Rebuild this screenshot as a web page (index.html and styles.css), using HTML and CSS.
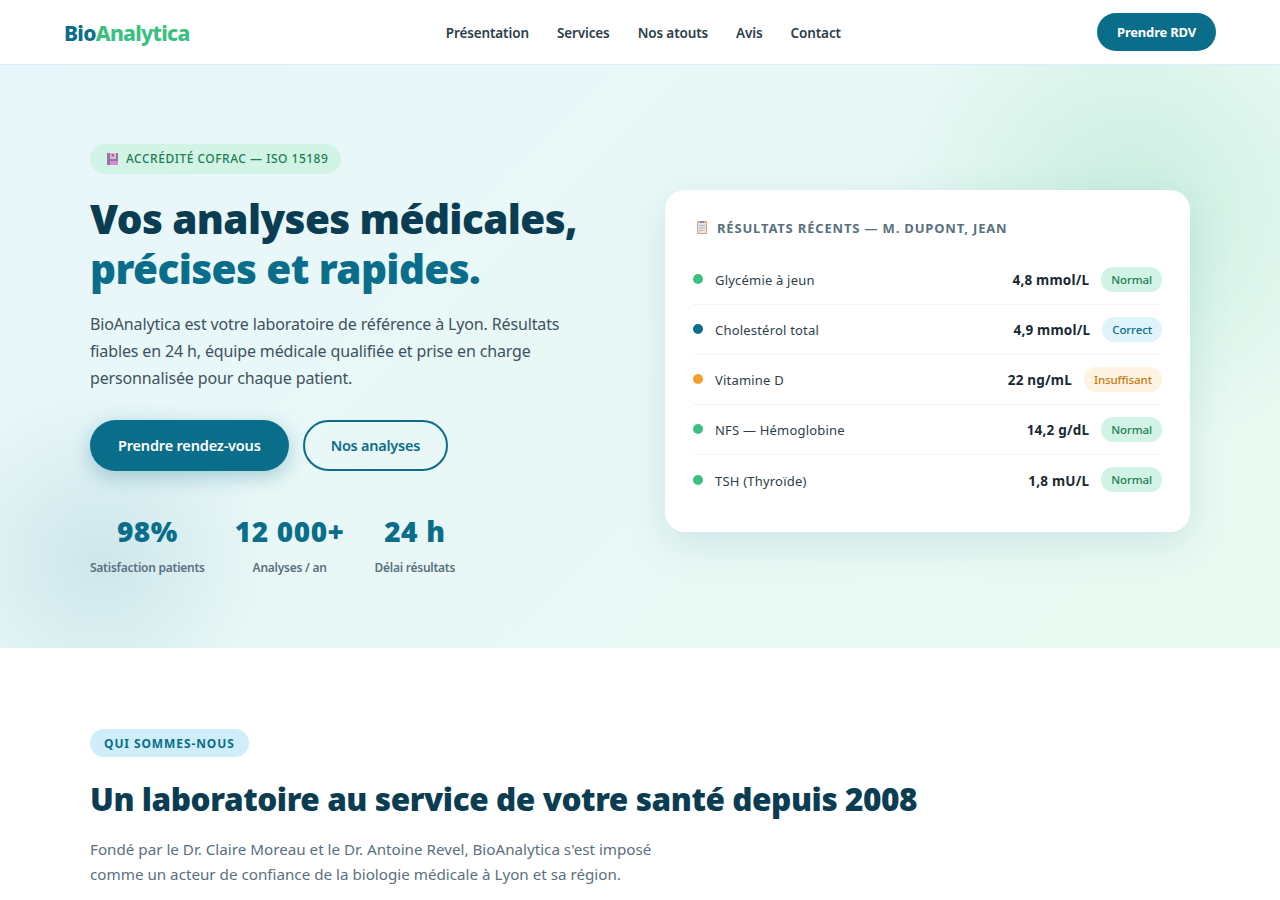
FILE: index.html
```html
<!DOCTYPE html>
<html lang="fr">
<head>
<meta charset="utf-8">
<title>BioAnalytica</title>
<link rel="stylesheet" href="styles.css">
</head>
<body>
<header class="nav">
  <a class="logo" href="#">Bio<span>Analytica</span></a>
  <nav class="nav-links">
    <a href="#">Présentation</a>
    <a href="#">Services</a>
    <a href="#">Nos atouts</a>
    <a href="#">Avis</a>
    <a href="#">Contact</a>
  </nav>
  <a class="nav-cta" href="#">Prendre RDV</a>
</header>
<section class="hero">
  <div class="blob blob-top"></div>
  <div class="blob blob-bottom"></div>
  <div class="hero-grid">
    <div class="hero-left">
      <div class="badge">
        <svg class="badge-icon" viewBox="0 0 11 12" width="11" height="12"><rect width="11" height="12" fill="#8f7aa3"/><rect x="3" y="0" width="6" height="6" fill="#d8bcd8"/><rect x="4.5" y="1" width="2.5" height="2.5" fill="#e0408f"/><rect x="3" y="8" width="8" height="4" fill="#d68ad8"/></svg>
        <span>ACCRÉDITÉ COFRAC — ISO 15189</span>
      </div>
      <h1>Vos analyses médicales,<br><span>précises et rapides.</span></h1>
      <p class="lead">BioAnalytica est votre laboratoire de référence à Lyon. Résultats fiables en 24 h, équipe médicale qualifiée et prise en charge personnalisée pour chaque patient.</p>
      <div class="actions">
        <a class="btn btn-primary" href="#">Prendre rendez-vous</a>
        <a class="btn btn-outline" href="#">Nos analyses</a>
      </div>
      <div class="stats">
        <div class="stat"><strong>98%</strong><span>Satisfaction patients</span></div>
        <div class="stat"><strong>12 000+</strong><span>Analyses / an</span></div>
        <div class="stat"><strong>24 h</strong><span>Délai résultats</span></div>
      </div>
    </div>
    <div class="card">
      <div class="card-title">
        <svg viewBox="0 0 10 13" width="10" height="13"><rect width="10" height="13" rx="1" fill="#d9a077"/><rect x="1" y="1.5" width="8" height="10.5" fill="#e4e4ea"/><rect x="3" y="0" width="4" height="2" fill="#8c8c96"/><rect x="2" y="4" width="6" height="1" fill="#b5b5c0"/><rect x="2" y="6.5" width="6" height="1" fill="#b5b5c0"/><rect x="2" y="9" width="4" height="1" fill="#b5b5c0"/></svg>
        <span>RÉSULTATS RÉCENTS — M. DUPONT, JEAN</span>
      </div>
      <div class="row"><i class="dot green"></i><span class="name">Glycémie à jeun</span><b class="val">4,8 mmol/L</b><em class="tag tag-green">Normal</em></div>
      <div class="row"><i class="dot blue"></i><span class="name">Cholestérol total</span><b class="val">4,9 mmol/L</b><em class="tag tag-blue">Correct</em></div>
      <div class="row"><i class="dot orange"></i><span class="name">Vitamine D</span><b class="val">22 ng/mL</b><em class="tag tag-orange">Insuffisant</em></div>
      <div class="row"><i class="dot green"></i><span class="name">NFS — Hémoglobine</span><b class="val">14,2 g/dL</b><em class="tag tag-green">Normal</em></div>
      <div class="row"><i class="dot green"></i><span class="name">TSH (Thyroïde)</span><b class="val">1,8 mU/L</b><em class="tag tag-green">Normal</em></div>
    </div>
  </div>
</section>
<section class="about">
  <div class="pill">QUI SOMMES-NOUS</div>
  <h2>Un laboratoire au service de votre santé depuis 2008</h2>
  <p>Fondé par le Dr. Claire Moreau et le Dr. Antoine Revel, BioAnalytica s'est imposé comme un acteur de confiance de la biologie médicale à Lyon et sa région.</p>
</section>
</body>
</html>
```
FILE: styles.css
```css
* { box-sizing: border-box; }
html, body { margin: 0; padding: 0; }
body { font-family: "Noto Sans", "Open Sans", sans-serif; color: #0a3d52; background: #fff; }
a { text-decoration: none; color: inherit; }

.nav { height: 65px; padding: 0 64px; display: flex; align-items: center; justify-content: space-between; background: #fff; border-bottom: 1px solid #d9eff7; }
.logo { padding-top: 2px; font-size: 21px; font-weight: 800; color: #0a6e8a; letter-spacing: -0.7px; }
.logo span { color: #3dbf82; }
.nav-links { padding-top: 2px; display: flex; gap: 28px; font-size: 13.5px; font-weight: 600; color: #2d3e4a; letter-spacing: -0.12px; }
.nav-cta { height: 38px; padding: 0 20px; display: flex; align-items: center; border-radius: 19px; background: #0a6e8a; color: #fff; font-size: 13px; font-weight: 700; letter-spacing: -0.2px; }

.hero { position: relative; overflow: hidden; height: 583px; padding: 6px 90px 0; display: flex; align-items: center; background: linear-gradient(135deg, #e8f6fb 0%, #eafaf1 100%); }
.blob { position: absolute; border-radius: 50%; }
.blob-top { width: 500px; height: 500px; right: -100px; top: -105px; background: radial-gradient(circle, rgba(61,191,130,.18) 0%, rgba(61,191,130,0) 70%); }
.blob-bottom { width: 350px; height: 350px; left: -75px; top: 320px; background: radial-gradient(circle, rgba(10,110,138,.12) 0%, rgba(10,110,138,0) 70%); }
.hero-grid { position: relative; width: 1100px; display: grid; grid-template-columns: 525px 525px; gap: 50px; align-items: center; }

.badge { display: inline-flex; align-items: center; gap: 8px; height: 30px; padding: 0 13px 0 17px; border-radius: 15px; background: #d2f4e6; color: #1e7d52; font-size: 12px; font-weight: 500; letter-spacing: .5px; }
h1 { margin: 20px 0 0; font-size: 40.5px; line-height: 50px; font-weight: 900; letter-spacing: -0.6px; color: #0a3d52; }
h1 span { color: #0a6e8a; }
.lead { margin: 17px 0 0; width: 480px; font-size: 16px; line-height: 27px; letter-spacing: -0.14px; color: #3d5260; }
.actions { display: flex; gap: 14px; margin-top: 28px; }
.btn { height: 51px; display: flex; align-items: center; border-radius: 26px; font-size: 14.5px; font-weight: 600; letter-spacing: -0.18px; }
.btn-primary { padding: 0 28px; background: #0a6e8a; color: #fff; box-shadow: 0 6px 20px rgba(10,110,138,.3); }
.btn-outline { padding: 0 26px; border: 2px solid #0a6e8a; color: #0a6e8a; letter-spacing: -0.25px; }
.stats { display: flex; gap: 30px; margin-top: 39px; }
.stat { display: flex; flex-direction: column; align-items: center; }
.stat strong { font-size: 28px; line-height: 42px; font-weight: 900; letter-spacing: .5px; word-spacing: .5px; color: #0a6e8a; }
.stat span { margin-top: 7px; font-size: 12px; font-weight: 600; letter-spacing: -0.25px; color: #5a7080; }

.card { margin-top: 2px; background: #fff; border-radius: 20px; padding: 28px 28px 27px; box-shadow: 0 12px 40px rgba(10,110,138,.13); }
.card-title { display: flex; align-items: center; gap: 10px; margin: 0 0 17px 4px; height: 20px; font-size: 13px; font-weight: 700; color: #5a7080; letter-spacing: .83px; }
.row { display: flex; align-items: center; height: 50px; border-bottom: 1px solid #edf6fa; }
.row:last-child { border-bottom: 0; }
.dot { width: 10px; height: 10px; border-radius: 50%; margin-right: 12px; }
.green { background: #3dbf82; }
.blue { background: #0a6e8a; }
.orange { background: #f0a030; }
.name { flex: 1; padding-top: 2px; font-size: 13px; letter-spacing: .2px; color: #2d3e4a; }
.val { padding-top: 2px; font-size: 13.5px; font-weight: 700; letter-spacing: .2px; color: #1a2a33; }
.tag { margin-left: 12px; height: 25px; padding: 0 10px; display: flex; align-items: center; border-radius: 12px; font-style: normal; font-size: 11.5px; font-weight: 500; letter-spacing: -0.1px; }
.tag-green { background: #d2f4e6; color: #1e7d52; }
.tag-blue { background: #e0f4fc; color: #0a6e8a; }
.tag-orange { background: #fef3e2; color: #c47d10; }

.about { padding: 81px 90px 0; height: 252px; overflow: hidden; }
.pill { display: inline-flex; align-items: center; height: 28px; padding: 0 14px; border-radius: 14px; background: #d0eef9; color: #0a6e8a; font-size: 12px; font-weight: 700; letter-spacing: .9px; }
h2 { margin: 20px 0 0; font-size: 31.5px; line-height: 44px; font-weight: 900; letter-spacing: -0.43px; color: #0a3d52; }
.about p { margin: 16px 0 0; width: 600px; font-size: 15.2px; line-height: 25px; color: #5a7080; }
```
